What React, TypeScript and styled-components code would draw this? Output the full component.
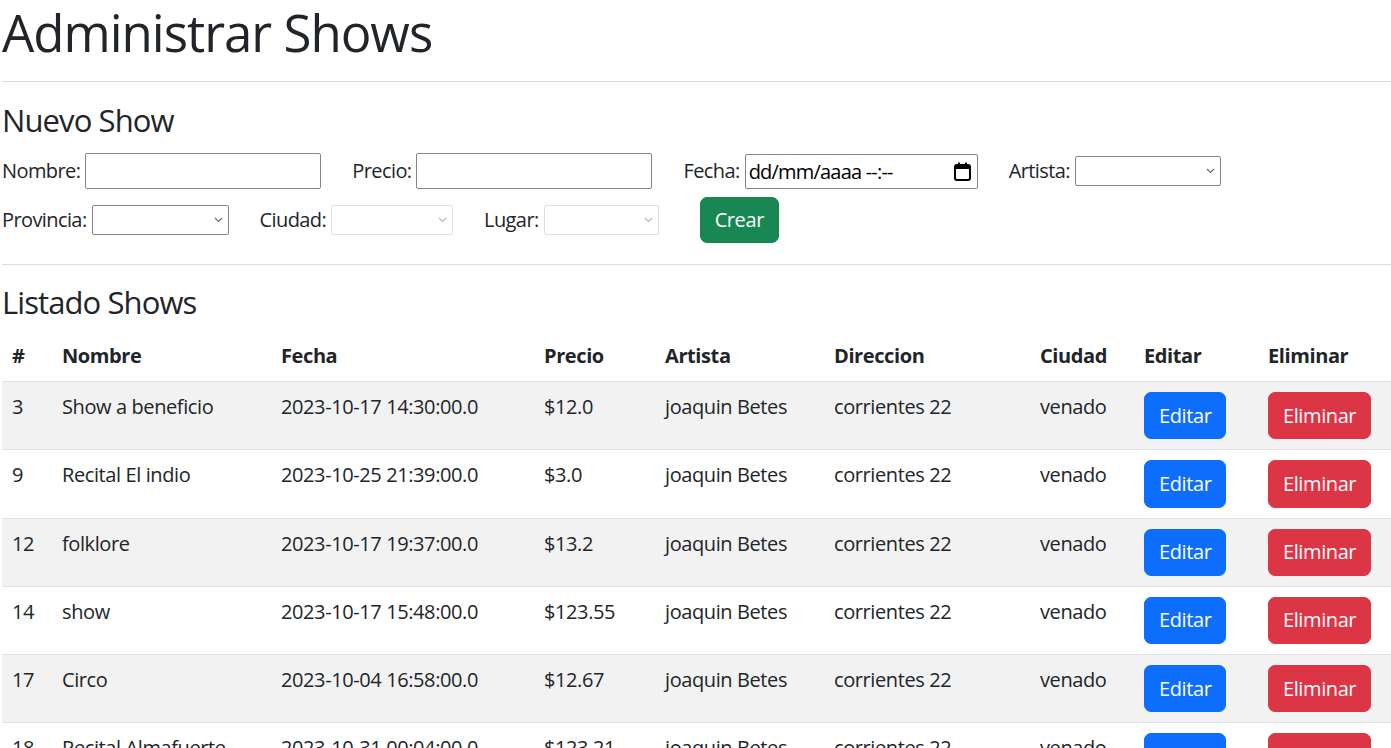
import React from 'react';
import styled, { createGlobalStyle } from 'styled-components';

const GlobalStyle = createGlobalStyle`
  html, body { margin: 0; padding: 0; background: #fff; }
  body {
    font-family: "Open Sans", "Noto Sans", Arial, sans-serif;
    color: #212529;
    overflow: hidden;
  }
  * { box-sizing: border-box; }
`;

const Page = styled.div`
  width: 1391px;
  padding-left: 2px;
  font-size: 20px;
  letter-spacing: -0.02em;
`;

const Title = styled.h1`
  margin: 0;
  font-size: 51px;
  font-weight: 400;
  line-height: 64px;
  letter-spacing: -1px;
`;

const Rule = styled.hr<{ $top: number; $bottom: number }>`
  margin: ${(p) => p.$top}px 0 ${(p) => p.$bottom}px;
  border: 0;
  border-top: 1px solid #d9dadb;
  height: 0;
`;

const Subtitle = styled.h3<{ $bottom: number }>`
  margin: 0 0 ${(p) => p.$bottom}px;
  font-size: 31px;
  font-weight: 400;
  line-height: 37px;
  letter-spacing: -0.9px;
`;

const FormRow = styled.div<{ $height: number; $top?: number }>`
  display: flex;
  align-items: center;
  gap: 31px;
  height: ${(p) => p.$height}px;
  margin-top: ${(p) => p.$top ?? 0}px;
`;

const Field = styled.div`
  display: flex;
  align-items: center;
  gap: 5px;
`;

const Label = styled.label`
  font-size: 20px;
  line-height: 30px;
  letter-spacing: -0.03em;
`;

const TextInput = styled.input<{ $w: number }>`
  width: ${(p) => p.$w}px;
  height: 36px;
  border: 1px solid #858585;
  border-radius: 2px;
  font: inherit;
  padding: 0 4px;
  background: #fff;
`;

const DateBox = styled.div`
  width: 233px;
  height: 35px;
  border: 1px solid #858585;
  border-radius: 2px;
  display: flex;
  align-items: center;
  justify-content: space-between;
  padding: 0 6px 0 3px;
  color: #000;
  font-size: 20px;
  letter-spacing: -0.04em;
`;

const SelectWrap = styled.div`
  position: relative;
  display: inline-flex;
`;

const Select = styled.select<{ $w: number }>`
  appearance: none;
  -webkit-appearance: none;
  width: ${(p) => p.$w}px;
  height: 30px;
  border: 1px solid #858585;
  border-radius: 2px;
  background: #fff;
  font: inherit;
  font-size: 16px;
  &:disabled {
    border-color: #d4d4d4;
    background: #fff;
  }
`;

const Chevron = styled.svg`
  position: absolute;
  right: 6px;
  top: 12px;
  pointer-events: none;
`;

const Button = styled.button<{ $bg: string }>`
  display: inline-block;
  font-family: inherit;
  font-size: 20px;
  line-height: 30px;
  letter-spacing: -0.02em;
  color: #fff;
  background: ${(p) => p.$bg};
  border: 1px solid ${(p) => p.$bg};
  border-radius: 7px;
  padding: 7.625px 14px;
  cursor: pointer;
`;

const CreateButton = styled(Button)`
  margin-left: 10px;
  padding: 7px 14px;
`;

const Table = styled.table`
  width: 1389px;
  border-collapse: collapse;
  table-layout: fixed;
`;

const Col = styled.col<{ $w: number }>`
  width: ${(p) => p.$w}px;
`;

const HeadCell = styled.th`
  text-align: left;
  font-weight: 700;
  font-size: 20px;
  line-height: 30px;
  padding: 10px;
  border-bottom: 1px solid #dee2e6;
  vertical-align: top;
  white-space: nowrap;
`;

const Row = styled.tr<{ $striped: boolean }>`
  background: ${(p) => (p.$striped ? '#f2f2f2' : '#fff')};
`;

const Cell = styled.td`
  font-size: 20px;
  line-height: 30px;
  padding: 10px;
  border-bottom: 1px solid #dee2e6;
  vertical-align: top;
  white-space: nowrap;
`;

const ChevronIcon = ({ disabled }: { disabled?: boolean }) => (
  <Chevron width="9" height="6" viewBox="0 0 9 6">
    <path d="M1 1l3.5 3.5L8 1" fill="none" stroke={disabled ? '#b5b5b5' : '#6b6b6b'} strokeWidth="1.1" />
  </Chevron>
);

const SelectBox = ({ w, disabled }: { w: number; disabled?: boolean }) => (
  <SelectWrap>
    <Select $w={w} disabled={disabled}>
      <option value=""></option>
    </Select>
    <ChevronIcon disabled={disabled} />
  </SelectWrap>
);

const CalendarIcon = () => (
  <svg width="17" height="19" viewBox="0 0 17 19">
    <rect x="1" y="3" width="15" height="15" rx="2" fill="none" stroke="#000" strokeWidth="2" />
    <rect x="1" y="3" width="15" height="4" fill="#000" />
    <rect x="4" y="0.5" width="2" height="4" fill="#000" />
    <rect x="11" y="0.5" width="2" height="4" fill="#000" />
  </svg>
);

const shows = [
  { id: 3, nombre: 'Show a beneficio', fecha: '2023-10-17 14:30:00.0', precio: '$12.0' },
  { id: 9, nombre: 'Recital El indio', fecha: '2023-10-25 21:39:00.0', precio: '$3.0' },
  { id: 12, nombre: 'folklore', fecha: '2023-10-17 19:37:00.0', precio: '$13.2' },
  { id: 14, nombre: 'show', fecha: '2023-10-17 15:48:00.0', precio: '$123.55' },
  { id: 17, nombre: 'Circo', fecha: '2023-10-04 16:58:00.0', precio: '$12.67' },
  { id: 18, nombre: 'Recital Almafuerte', fecha: '2023-10-31 00:04:00.0', precio: '$123.21' },
];

const colWidths = [50, 219, 263, 121, 169, 206, 104, 124, 133];
const headers = ['#', 'Nombre', 'Fecha', 'Precio', 'Artista', 'Direccion', 'Ciudad', 'Editar', 'Eliminar'];

export default function App() {
  return (
    <Page>
      <GlobalStyle />
      <Title>Administrar Shows</Title>
      <Rule $top={17} $bottom={20} />
      <Subtitle $bottom={14}>Nuevo Show</Subtitle>
      <FormRow $height={36}>
        <Field>
          <Label>Nombre:</Label>
          <TextInput $w={236} type="text" />
        </Field>
        <Field>
          <Label>Precio:</Label>
          <TextInput $w={236} type="text" />
        </Field>
        <Field>
          <Label>Fecha:</Label>
          <DateBox>
            <span>dd/mm/aaaa --:--</span>
            <CalendarIcon />
          </DateBox>
        </Field>
        <Field>
          <Label>Artista:</Label>
          <SelectBox w={146} />
        </Field>
      </FormRow>
      <FormRow $height={46} $top={8}>
        <Field>
          <Label>Provincia:</Label>
          <SelectBox w={137} />
        </Field>
        <Field>
          <Label>Ciudad:</Label>
          <SelectBox w={122} disabled />
        </Field>
        <Field>
          <Label>Lugar:</Label>
          <SelectBox w={115} disabled />
        </Field>
        <CreateButton $bg="#198754">Crear</CreateButton>
      </FormRow>
      <Rule $top={21} $bottom={19} />
      <Subtitle $bottom={10}>Listado Shows</Subtitle>
      <Table>
        <colgroup>
          {colWidths.map((w, i) => (
            <Col key={i} $w={w} />
          ))}
        </colgroup>
        <thead>
          <tr>
            {headers.map((h) => (
              <HeadCell key={h}>{h}</HeadCell>
            ))}
          </tr>
        </thead>
        <tbody>
          {shows.map((s, i) => (
            <Row key={s.id} $striped={i % 2 === 0}>
              <Cell>{s.id}</Cell>
              <Cell>{s.nombre}</Cell>
              <Cell>{s.fecha}</Cell>
              <Cell>{s.precio}</Cell>
              <Cell>joaquin Betes</Cell>
              <Cell>corrientes 22</Cell>
              <Cell>venado</Cell>
              <Cell>
                <Button $bg="#0d6efd">Editar</Button>
              </Cell>
              <Cell>
                <Button $bg="#dc3545">Eliminar</Button>
              </Cell>
            </Row>
          ))}
        </tbody>
      </Table>
    </Page>
  );
}
